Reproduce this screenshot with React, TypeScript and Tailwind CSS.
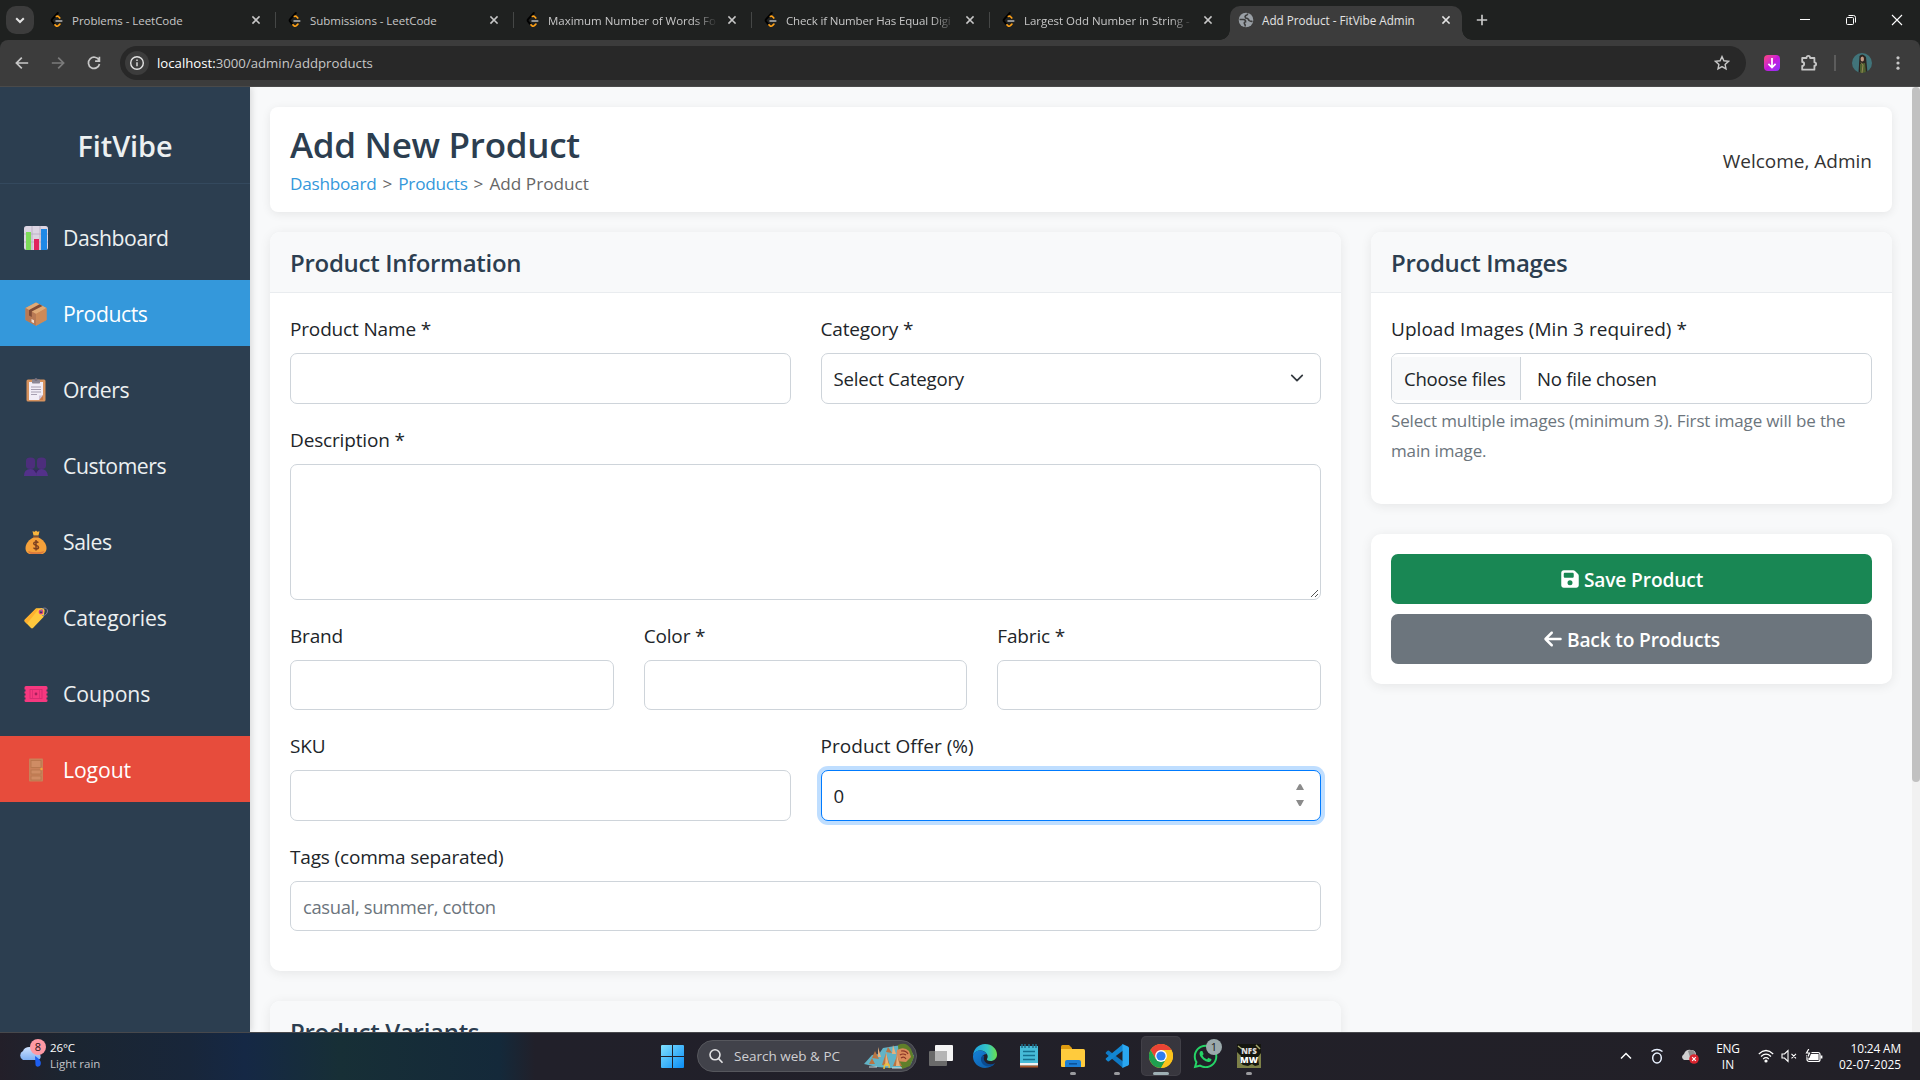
import type { ReactNode } from "react";
import { FaFloppyDisk, FaArrowLeft, FaWhatsapp } from "react-icons/fa6";

function LeetIcon() {
  return (
    <svg viewBox="0 0 16 16" className="size-4 shrink-0" fill="none" strokeLinecap="round">
      <path d="M8.800 1 3 7.400q-.8 1 0 2L5 11.800" stroke="#000" strokeWidth="1.900" />
      <path d="M7.400 4.400Q8.400 3.600 9.400 4.500L10.800 6" stroke="#ffa116" strokeWidth="1.700" />
      <path d="M6 12.800 6.900 13.700Q8.200 14.600 9.400 13.600L10.900 12.100" stroke="#ffa116" strokeWidth="1.700" />
      <path d="M7 9h5.800" stroke="#b9b9b9" strokeWidth="1.500" />
    </svg>
  );
}

function GlobeIcon() {
  return (
    <svg viewBox="0 0 16 16" className="size-4 shrink-0">
      <circle cx="8" cy="8" r="7.300" fill="#9aa0a6" />
      <path d="M1.500 7.500h3.800q2.500.2 2.300 2.300-2 .5-1 2.200.8.600.6 2.500M9.500 1.500Q9.800 3 7.800 3.500 6.500 4.500 7.500 6q3 .2 3.500 2.500 1.500 1.200 3.500.8" stroke="#3c3c3c" strokeWidth="1.600" fill="none" />
    </svg>
  );
}

function CloseIcon({ className = "" }: { className?: string }) {
  return (
    <svg viewBox="0 0 16 16" className={`size-4 shrink-0 ${className}`} stroke="currentColor" strokeWidth="1.600" strokeLinecap="square">
      <path d="M5 5l6 6M11 5l-6 6" />
    </svg>
  );
}

const tabs = [
  "Problems - LeetCode",
  "Submissions - LeetCode",
  "Maximum Number of Words Fo",
  "Check if Number Has Equal Digi",
  "Largest Odd Number in String -",
];

function TabStrip() {
  return (
    <div className="flex h-10 items-center bg-[#1f2120] pl-1.5">
      <div className="mr-1 flex size-7 items-center justify-center rounded-[10px] bg-[#3c3c3c] text-[#e3e3e3]">
        <svg viewBox="0 0 16 16" className="size-4" fill="none" stroke="currentColor" strokeWidth="2">
          <path d="M4.2 6.2 8 10l3.800-3.800" />
        </svg>
      </div>
      {tabs.map((t, i) => (
        <div key={t} className="flex h-7 w-[238px] shrink-0 items-center pl-[11px] text-[#c7c7c7]">
          <LeetIcon />
          <span
            className={`mt-[2px] ml-[7px] w-[170px] text-[11.5px] tracking-[-0.04px] whitespace-nowrap ${
              i > 1 ? "[mask-image:linear-gradient(to_right,#000_146px,transparent_170px)]" : ""
            } ${i === 3 ? "tracking-[-0.15px]" : ""}`}
          >
            {t}
          </span>
          <CloseIcon className="ml-1.5" />
          {i < 4 && <div className="ml-[11px] h-4 w-[1.5px] bg-[#454746]" />}
        </div>
      ))}
      <div className="relative mt-1.5 ml-0.5 flex h-[34px] w-[232px] shrink-0 items-center self-start rounded-t-[10px] bg-[#3c3c3c] pb-1.5 pl-2 text-[#e3e3e3]">
        <div className="absolute bottom-0 -left-2.5 size-2.5 bg-[radial-gradient(circle_at_0_0,transparent_9.5px,#3c3c3c_10px)]" />
        <div className="absolute -right-2.5 bottom-0 size-2.5 bg-[radial-gradient(circle_at_100%_0,transparent_9.5px,#3c3c3c_10px)]" />
        <GlobeIcon />
        <span className="mt-[2px] ml-2 w-[168px] text-[11.7px] whitespace-nowrap">Add Product - FitVibe Admin</span>
        <CloseIcon className="ml-2" />
      </div>
      <svg viewBox="0 0 16 16" className="ml-3 size-4 text-[#c7c7c7]" stroke="currentColor" strokeWidth="1.700">
        <path d="M8 2.800v10.400M2.800 8h10.400" />
      </svg>
      <div className="mr-[17px] ml-auto flex items-center gap-[34px] text-white">
        <svg viewBox="0 0 12 12" className="size-3" stroke="currentColor" strokeWidth="1"><path d="M1 5.500h10" /></svg>
        <svg viewBox="0 0 12 12" className="size-3" stroke="currentColor" strokeWidth="1" fill="none">
          <rect x="1.5" y="3.500" width="7" height="7" rx="1" />
          <path d="M3.500 1.500h5a2 2 0 0 1 2 2v5" />
        </svg>
        <svg viewBox="0 0 12 12" className="size-3" stroke="currentColor" strokeWidth="1.100"><path d="M1 1l10 10M11 1L1 11" /></svg>
      </div>
    </div>
  );
}

function Toolbar() {
  return (
    <div className="bg-[#1f2120]">
      <div className="flex h-[47px] items-center rounded-t-lg border-b border-[#4a4a4a] bg-[#3c3c3c] pl-3.5 text-[#c7c7c7]">
        <svg viewBox="0 0 16 16" className="size-4" fill="none" stroke="currentColor" strokeWidth="1.700"><path d="M14.200 8H2.500M7.800 2.600 2.400 8l5.400 5.400" /></svg>
        <svg viewBox="0 0 16 16" className="ml-5 size-4 text-[#7b7b7b]" fill="none" stroke="currentColor" strokeWidth="1.700"><path d="M1.800 8h11.700M8.200 2.600 13.600 8l-5.400 5.400" /></svg>
        <svg viewBox="0 0 16 16" className="ml-5 size-4" fill="none" stroke="currentColor" strokeWidth="1.700"><path d="M13 5.200A5.600 5.600 0 1 0 13.500 9M13.400 1.800v4.300H9.100" /></svg>
        <div className="ml-[18px] flex h-[34px] w-[1626px] items-center rounded-full bg-[#282828] pl-[5px]">
          <div className="flex size-6 items-center justify-center rounded-full bg-[#3c3c3c] text-[#e3e3e3]">
            <svg viewBox="0 0 16 16" className="size-4" fill="none" stroke="currentColor" strokeWidth="1.400">
              <circle cx="8" cy="8" r="6.300" />
              <path d="M8 7.200v4M8 4.500v1.500" />
            </svg>
          </div>
          <span className="mt-px ml-2 text-[13.2px] text-[#c7c7c7]"><span className="text-white">localhost:</span>3000/admin/addproducts</span>
          <svg viewBox="0 0 16 16" className="mr-4 ml-auto size-4" fill="none" stroke="currentColor" strokeWidth="1.400">
            <path d="M8 1.600l1.900 4.200 4.600.5-3.400 3.100.9 4.500L8 11.600l-4 2.300.9-4.500L1.500 6.300l4.600-.5z" />
          </svg>
        </div>
        <div className="ml-[18px] flex size-4 items-center justify-center rounded-sm bg-linear-to-br from-[#ff3d77] via-[#c814d8] to-[#8a2bff]">
          <svg viewBox="0 0 16 16" className="size-4" fill="none" stroke="#fff" strokeWidth="1.700"><path d="M8 3v9.400M4.400 8.800 8 12.600l3.600-3.800" /></svg>
        </div>
        <svg viewBox="0 0 18 18" className="ml-5 size-[18px]" fill="none" stroke="currentColor" strokeWidth="1.800" strokeLinejoin="round">
          <path d="M2.200 4h4.300c0-2.900 3.600-2.900 3.600 0h4.300v4.300c2.300 0 2.300 3.400 0 3.400v4H2.200v-3.900c2.600 0 2.600-3.800 0-3.800z" />
        </svg>
        <div className="ml-4 h-4 w-[1.5px] bg-[#5c5c5c]" />
        <svg viewBox="0 0 20 20" className="ml-4 size-5 rounded-full">
          <rect width="20" height="20" fill="#41747a" />
          <path d="M7.500 3q3-3.500 6.500 1l1.500 16h-9z" fill="#2c2520" />
          <ellipse cx="10.300" cy="6" rx="1.700" ry="2.600" fill="#c39b86" />
          <path d="M8 11l5-1 1 10H8z" fill="#4f6130" />
          <path d="M9 9.500l2 2.500-1 8" stroke="#a8935f" strokeWidth=".8" fill="none" />
        </svg>
        <svg viewBox="0 0 16 16" className="ml-[18px] size-4" fill="currentColor"><circle cx="8" cy="2.800" r="1.600" /><circle cx="8" cy="8" r="1.600" /><circle cx="8" cy="13.200" r="1.600" /></svg>
      </div>
    </div>
  );
}

const navIcons: Record<string, ReactNode> = {
  Dashboard: (
    <>
      <rect width="24" height="24" rx="2.500" fill="#dcd5e3" />
      <path d="M0 8h24M0 16h24M8 0v24M16 0v24" stroke="#b5abc0" strokeWidth=".8" />
      <rect x="2" y="6" width="5" height="18" fill="#7ddc5a" />
      <rect x="10" y="13" width="5" height="11" fill="#e0245e" />
      <rect x="17" y="3" width="6" height="21" fill="#1e88e5" />
    </>
  ),
  Products: (
    <>
      <path d="M12 .5 22.500 6v12L12 23.800 1.500 18V6z" fill="#c98a5f" />
      <path d="M12 .5 22.500 6 12 12 1.500 6z" fill="#e0aa76" />
      <path d="M12 12l10.500-6v12L12 23.800z" fill="#cd8a58" />
      <path d="M12 12 1.500 6v12L12 23.800z" fill="#b87954" />
      <path d="M15.500 2.300 5 8v5.500l2.800 1.500V9.500L18.500 4z" fill="#7f4b36" />
      <path d="M7.500 17l2.500 1.300v3L7.500 20z" fill="#f0dccd" />
    </>
  ),
  Orders: (
    <>
      <rect x="2.500" y="1.500" width="19" height="22" rx="1.500" fill="#d6925e" />
      <path d="M5 4h14v13l-4 5H5z" fill="#f2edf7" />
      <path d="M19 17v5h-4z" fill="#c87a4a" />
      <path d="M15 22v-4.500h4z" fill="#cfc5da" />
      <rect x="8" y="1.500" width="8" height="4" rx=".8" fill="#8d8795" />
      <circle cx="12" cy="1.500" r="1.500" fill="#77717f" />
      <path d="M7 9h10M7 11.500h10M7 14h10M7 16.500h6" stroke="#a79fb2" strokeWidth="1" />
    </>
  ),
  Customers: (
    <>
      <path d="M2 6.500Q2 3.500 6.500 3.500T11 6.500V12q0 3-4.500 3T2 12z" fill="#4d2e7c" />
      <path d="M13 6.500q0-3 4.500-3t4.500 3V12q0 3-4.500 3T13 12z" fill="#4d2e7c" />
      <path d="M0 22q0-7 6.500-7t5.500 7zM12 22q0-7 5.500-7t6.500 7z" fill="#53318a" />
      <path d="M9 15l3 1 3-1-3 4z" fill="#3a2266" />
    </>
  ),
  Sales: (
    <>
      <path d="M12 .5l1.300 1.200 2.200-.4-1 4.200h-5l-1-4.200 2.200.4z" fill="#f9b43c" />
      <path d="M9 6h6l-.5 1.800h-5z" fill="#8a4b2a" />
      <path d="M9.500 7.500h5c4 1.500 8 6 8 10.500 0 3.500-2 6-5 6h-11c-3 0-5-2.500-5-6 0-4.500 4-9 8-10.500z" fill="#f5a13a" />
      <path d="M4 21q8 2.500 16.500 0-1.500 3-4 3h-9Q5 24 4 21z" fill="#dd7a3c" />
      <path d="M14.300 12.800c-1-1.400-4.600-1.300-4.600.7 0 2.500 4.800 1.300 4.800 3.800 0 2-3.800 2.200-5 .4M12 10v10.500" stroke="#7b3f20" strokeWidth="1.500" fill="none" />
    </>
  ),
  Categories: (
    <>
      <path d="M12 2.500l6.500-.5q2.500 1 2 3.500L19.500 11 9 22q-1 .8-2 0L.7 15.500q-.7-.8 0-1.700z" fill="#ffc83d" />
      <path d="M.7 13.800 12 2.500h3L3 17.800.7 15.500z" fill="#ffb02e" />
      <circle cx="17" cy="6" r="2.400" fill="#e0408a" />
      <circle cx="17" cy="6" r="1.300" fill="#46305e" />
      <path d="M17 6c0-5 6.500-5 6.500-1 0 3-3 5-5.500 4.500" stroke="#8b8299" strokeWidth="1" fill="none" />
    </>
  ),
  Coupons: (
    <>
      <path d="M2 4h20q1.500 0 1.500 1.500V7.500h-1v2h1v2h-1v2h1v2h-1v2h1v1q0 1.500-1.500 1.500H2Q.5 20 .5 18.500v-1h1v-2h-1v-2h1v-2h-1v-2h1v-2h-1v-2Q.5 4 2 4z" fill="#f6387f" />
      <rect x="6" y="7.500" width="12" height="9" fill="none" stroke="#cf2a6e" strokeWidth=".8" />
      <path d="M8.500 8v8M15.500 8v8" stroke="#cf2a6e" strokeWidth=".6" />
      <circle cx="12" cy="12" r="1.400" fill="#a9205d" />
    </>
  ),
  Logout: (
    <>
      <rect x="5" y=".5" width="14" height="23" rx=".8" fill="#c98159" />
      <rect x="7" y="2.500" width="10" height="7" fill="#cf8c64" stroke="#b5754d" strokeWidth=".8" />
      <rect x="7" y="12" width="10" height="4" fill="#cf8c64" stroke="#b5754d" strokeWidth=".8" />
      <rect x="7" y="18" width="10" height="4" fill="#cf8c64" stroke="#b5754d" strokeWidth=".8" />
      <circle cx="17.500" cy="11" r="1.200" fill="#f2a63a" />
    </>
  ),
};

const looseLabels = ["Categories", "Coupons", "Logout"];

function Sidebar() {
  return (
    <aside className="z-10 w-[250px] shrink-0 bg-[#2c3e50] text-[#ecf0f1] shadow-[2px_0_6px_rgba(0,0,0,0.12)]">
      <div className="flex h-[97px] items-center justify-center border-b border-[#34495e] pt-[22px] text-[28.8px] font-semibold tracking-[-0.05px]">FitVibe</div>
      <nav className="flex flex-col gap-2.5 pt-5">
        {Object.keys(navIcons).map((name) => (
          <div
            key={name}
            className={`flex h-[66px] items-center pt-[2px] pl-6 ${name === "Products" ? "bg-[#3498db] text-white" : ""} ${name === "Logout" ? "bg-[#e74c3c] text-white" : ""}`}
          >
            <svg viewBox="0 0 24 24" className="size-6">{navIcons[name]}</svg>
            <span className={`ml-[15px] text-[21.2px] ${looseLabels.includes(name) ? "tracking-[-0.1px]" : "tracking-[-0.42px]"}`}>{name}</span>
          </div>
        ))}
      </nav>
    </aside>
  );
}

const box = "rounded-[7px] border border-[#ced4da] bg-white";

function Field({ label, children }: { label: string; children: ReactNode }) {
  const wide = label.includes("Offer") || label.startsWith("Upload");
  return (
    <div className="flex flex-col">
      <div className={`mb-[9px] h-[30px] text-[19px] leading-[30px] text-[#212529] ${wide ? "tracking-[0.04px]" : "tracking-[-0.16px]"}`}>{label}</div>
      {children}
    </div>
  );
}

function Card({ title, className = "", children }: { title?: string; className?: string; children?: ReactNode }) {
  return (
    <section className={`overflow-hidden rounded-[10px] bg-white shadow-[0_2px_12px_rgba(0,0,0,0.08)] ${className}`}>
      {title && (
        <h2 className="flex h-[61px] items-center border-b border-[#e9ecef] bg-[#f8f9fa] px-5 pt-[2px] text-[24px] font-semibold tracking-[-0.29px] text-[#2c3e50]">{title}</h2>
      )}
      {children}
    </section>
  );
}

function Page() {
  return (
    <main className="flex flex-1 bg-[#f8f9fa]">
      <div className="flex-1 pt-5 pr-5 pl-5">
        <header className="mb-5 flex h-[105px] items-center justify-between rounded-lg bg-white px-5 shadow-[0_2px_10px_rgba(0,0,0,0.08)]">
          <div className="flex flex-col">
            <h1 className="h-[42px] text-[35px] leading-[43px] font-semibold tracking-[-0.3px] text-[#2c3e50]">Add New Product</h1>
            <div className="mt-[5px] h-[27px] text-[17.2px] leading-[27px] text-[#666]">
              <span className="tracking-[-0.25px] text-[#3498db]">Dashboard</span>
              <span className="mr-[6px] ml-[6px]">&gt;</span>
              <span className="tracking-[-0.25px] text-[#3498db]">Products</span>
              <span className="mx-[6px]">&gt;</span>
              <span>Add Product</span>
            </div>
          </div>
          <div className="pt-1 text-[19px] text-[#333]">Welcome, Admin</div>
        </header>
        <div className="flex items-start gap-[30px]">
          <div className="flex w-[1071px] flex-col gap-[30px]">
            <Card title="Product Information" className="h-[739px]">
              <div className="flex flex-col gap-[21px] px-5 pt-[21px]">
                <div className="grid grid-cols-2 gap-[30px]">
                  <Field label="Product Name *"><div className={`h-[51px] ${box}`} /></Field>
                  <Field label="Category *">
                    <div className={`flex h-[51px] items-center justify-between pr-4 pl-3 ${box}`}>
                      <span className="text-[18.6px] tracking-[-0.2px] text-[#212529]">Select Category</span>
                      <svg viewBox="0 0 16 16" className="mb-px size-[14px]" fill="none" stroke="#343a40" strokeWidth="2" strokeLinecap="round" strokeLinejoin="round"><path d="m2 5 6 6 6-6" /></svg>
                    </div>
                  </Field>
                </div>
                <Field label="Description *">
                  <div className={`flex h-[136px] items-end justify-end p-px ${box}`}>
                    <svg viewBox="0 0 9 9" className="size-[9px]" stroke="#555" strokeWidth="1"><path d="M1 8 8 1M5 8l3-3" /></svg>
                  </div>
                </Field>
                <div className="grid grid-cols-3 gap-[30px]">
                  <Field label="Brand"><div className={`h-[50px] ${box}`} /></Field>
                  <Field label="Color *"><div className={`h-[50px] ${box}`} /></Field>
                  <Field label="Fabric *"><div className={`h-[50px] ${box}`} /></Field>
                </div>
                <div className="grid grid-cols-2 gap-[30px]">
                  <Field label="SKU"><div className={`h-[51px] ${box}`} /></Field>
                  <Field label="Product Offer (%)">
                    <div className="flex h-[51px] items-center justify-between rounded-[7px] border border-[#007bff] bg-white pr-[15px] pl-3 shadow-[0_0_0_4px_rgba(0,123,255,0.25)]">
                      <span className="text-[18.6px] text-[#212529]">0</span>
                      <svg viewBox="0 0 10 24" className="mb-[2px] h-6 w-2.5" fill="#8b8b8b"><path d="M1 7 4 1.500q1-1 2 0L9 7zM1 17l3 5.500q1 1 2 0L9 17z" /></svg>
                    </div>
                  </Field>
                </div>
                <Field label="Tags (comma separated)">
                  <div className={`flex h-[50px] items-center pt-px pl-3 text-[18.4px] tracking-[-0.34px] text-[#6c757d] ${box}`}>casual, summer, cotton</div>
                </Field>
              </div>
            </Card>
            <Card title="Product Variants" className="h-[200px]" />
          </div>
          <div className="flex flex-1 flex-col gap-[30px]">
            <Card title="Product Images" className="h-[272px]">
              <div className="px-5 pt-[21px]">
                <Field label="Upload Images (Min 3 required) *">
                  <div className={`flex h-[51px] items-center text-[18.6px] tracking-[-0.25px] text-[#212529] ${box}`}>
                    <span className="flex h-[43px] w-[129px] items-center border-r border-[#ced4da] bg-[#f8f9fa] pl-3">Choose files</span>
                    <span className="ml-4">No file chosen</span>
                  </div>
                </Field>
                <p className="mt-0.5 text-[17px] leading-[30px] tracking-[-0.15px] text-[#6c757d]">
                  Select multiple images (minimum 3). First image will be the<br />main image.
                </p>
              </div>
            </Card>
            <Card className="flex h-[150px] flex-col gap-2.5 p-5">
              <div className="flex h-[50px] items-center justify-center gap-1 rounded-[7px] bg-[#198754] pt-[2px] text-[19.2px] font-semibold tracking-[-0.15px] text-white">
                <FaFloppyDisk className="mb-[2px] size-[20px]" />Save Product
              </div>
              <div className="flex h-[50px] items-center justify-center gap-1 rounded-[7px] bg-[#6c757d] pt-[2px] text-[19.2px] font-semibold tracking-[-0.18px] text-white">
                <FaArrowLeft className="mb-[2px] size-[20px]" />Back to Products
              </div>
            </Card>
          </div>
        </div>
      </div>
      <div className="w-2 bg-[#f1f1f1]"><div className="h-[695px] rounded-[4px] bg-[#c1c1c1]" /></div>
    </main>
  );
}

function TaskIcon({ children, active, dot }: { children: ReactNode; active?: boolean; dot?: boolean }) {
  return (
    <div className={`relative flex h-10 w-10 items-center justify-center rounded-[5px] ${active ? "border border-white/5 bg-white/10" : ""}`}>
      {children}
      {dot && <div className="absolute bottom-px h-[3px] w-1.5 rounded-full bg-[#9a9a9e]" />}
      {active && <div className="absolute bottom-0 h-[3px] w-4 rounded-full bg-[#9fb0b5]" />}
    </div>
  );
}

function Taskbar() {
  return (
    <footer className="flex h-12 items-center border-t border-[#47484c] bg-[linear-gradient(to_right,#231f29_0px,#1b2531_70px,#18263a_190px,#152845_245px,#172f36_340px,#14293a_500px,#21202a_535px,#222027_100%)] pb-px text-white">
      <div className="flex w-[652px] items-center pl-[17px]">
        <div className="relative size-7">
          <svg viewBox="0 0 28 28" className="size-7">
            <defs>
              <linearGradient id="cloud" x1="0" y1="0" x2="0" y2="1"><stop offset="0" stopColor="#cfe2fd" /><stop offset="1" stopColor="#7fb0f3" /></linearGradient>
            </defs>
            <path d="M6 18a5 5 0 0 1 0-9c1.500-5 11-6 13 1 5 0 7 8 1 8z" fill="url(#cloud)" />
            <path d="M18 14c4 3 7 5 5.500 9-1.500 2.500-5 2-5-.5z" fill="#1d5ff2" />
          </svg>
          <span className="absolute -top-[3px] left-[13px] flex size-4 items-center justify-center rounded-full bg-[#ff99a4] text-[11px] text-[#2b1116]">8</span>
        </div>
        <div className="ml-[5px] text-[11.5px] leading-4">
          <div className="tracking-[-0.1px]">26°C</div>
          <div className="text-[#c3c3c8]">Light rain</div>
        </div>
      </div>
      <TaskIcon>
        <svg viewBox="0 0 23 23" className="size-[23px]">
          <defs><linearGradient id="win" x1="0" y1="0" x2="1" y2="1"><stop offset="0" stopColor="#7fe0ff" /><stop offset="1" stopColor="#0a8df5" /></linearGradient></defs>
          <path d="M0 1q0-1 1-1h10v11H0zM12 0h10q1 0 1 1v10H12zM0 12h11v11H1q-1 0-1-1zM12 12h11v10q0 1-1 1H12z" fill="url(#win)" />
        </svg>
      </TaskIcon>
      <div className="ml-[5px] flex h-8 w-[220px] items-center rounded-full border border-[#56575d] bg-[#41424a] pl-2.5 text-[#cfcfd2]">
        <svg viewBox="0 0 16 16" className="size-4" fill="none" stroke="#e2e2e4" strokeWidth="1.600"><circle cx="7" cy="6.800" r="5" /><path d="M10.600 10.600 14.500 14.800" /></svg>
        <span className="ml-2.5 text-[13.5px]">Search web &amp; PC</span>
        <svg viewBox="0 0 50 26" className="mr-0.5 ml-auto h-[26px] w-[50px]">
          <path d="M0 21 8 12l7-1 4-6 12-2 8-1 7 4 4 7-3 8-7 4-14 0-13-1z" fill="#62b3c6" />
          <path d="M34 2q8-4 13 4l3 8-4 9-8 3-3-6z" fill="#5f7f2a" />
          <path d="M33 7q7-4 12 1l2 6-5 5-10-1z" fill="#d98a5a" />
          <path d="M37 8q5-1 7 3M36 12q3-2 6 0M37 15q3-2 5 1" stroke="#8a3326" fill="none" strokeWidth="1.200" />
          <path d="M5 21l3-6 3 6zM8 15l3-7 4 8zM22 9l2-5 4 6zM18 22l4-12 4 13zM29 23l4-10 5 10z" fill="#b97442" />
          <path d="M22 9l3 14h-4zM14 4l3 10h-3zM33 12l3 11h-4zM29 2l3 9h-4z" fill="#e9b07a" />
          <path d="M20 26q0-5 3-5t2 4" stroke="#e7c23b" strokeWidth="1.500" fill="none" />
          <path d="M5 24h8M28 25h10" stroke="#d9eef2" strokeWidth=".9" />
        </svg>
      </div>
      <div className="ml-1 flex items-center gap-1">
        <TaskIcon>
          <svg viewBox="0 0 24 24" className="size-6"><rect x="6" y="1" width="18" height="16" rx="1" fill="#f4f4f4" /><rect x="0" y="7" width="18" height="15" rx="1" fill="#6a6a6a" /><path d="M6 7h12v10H6z" fill="#b5b5b5" /></svg>
        </TaskIcon>
        <TaskIcon>
          <svg viewBox="0 0 24 24" className="size-6">
            <defs>
              <linearGradient id="e1" x1="0" y1="0" x2="1" y2="0"><stop offset="0" stopColor="#1b9de2" /><stop offset=".6" stopColor="#35c6c4" /><stop offset="1" stopColor="#6be04b" /></linearGradient>
              <linearGradient id="e2" x1="0" y1="0" x2="1" y2="1"><stop offset="0" stopColor="#1582d8" /><stop offset="1" stopColor="#0c59a4" /></linearGradient>
            </defs>
            <path d="M0 11.500C.5 5 5.500 0 12 0c7 0 12 5 12 10.500 0 4-3 6.500-6.500 6.500-3 0-4-1.200-3.500-2 1-1.500.8-3 .3-4.200C13 8 10 6.500 7.500 6.500 4 6.500 1 8.500 0 11.500z" fill="url(#e1)" />
            <path d="M0 12C.5 8.500 4 6.500 7.500 6.500c2.500 0 5 1.300 6 3.500-4 .5-5.500 3.500-4.800 6.500.8 3.700 5 5.500 9 4.800 1.500-.3 3.300-1.300 4.300-2C20 22 16.500 24 12 24 5 24-.3 18.500 0 12z" fill="url(#e2)" />
            <path d="M9.500 11.500c-2.500 2.500-2 7 1.500 9.500 3.300 2.300 8.500 1.300 11-1.700-4 2-9 .7-10.500-2.300-1-2-.7-4-.2-5z" fill="#0b4a8f" />
          </svg>
        </TaskIcon>
        <TaskIcon>
          <svg viewBox="0 0 20 24" className="h-6 w-5">
            <rect x="1" y="2" width="18" height="20" fill="#47bcd8" /><rect x="1" y="19" width="18" height="2.500" fill="#f1f1f1" /><rect x="1" y="21.500" width="18" height="2" fill="#a9562a" />
            <path d="M3 0v4M6 0v4M10 0v4M14 0v4M17 0v4" stroke="#1f6f8c" strokeWidth="1.500" /><path d="M4 7.500h12M4 11.500h12M4 15.500h12" stroke="#14708f" strokeWidth="1.500" />
          </svg>
        </TaskIcon>
        <TaskIcon dot>
          <svg viewBox="0 0 24 24" className="size-6">
            <path d="M0 2.500Q0 1 1.500 1H8l3 3v5H0z" fill="#e09c10" /><path d="M0 5h22.500Q24 5 24 6.500V22q0 1-1 1H1q-1 0-1-1z" fill="#ffcb3d" />
            <path d="M4 23v-5q0-2 2-2h12q2 0 2 2v5z" fill="#1c7fd6" /><rect x="8" y="19" width="8" height="1.600" fill="#0c539a" />
          </svg>
        </TaskIcon>
        <TaskIcon dot>
          <svg viewBox="0 0 24 24" className="size-6">
            <path d="M1 8.200 2.600 6.800q.7-.5 1.400 0L18 17.500V24L1 9.700q-.7-.8 0-1.500z" fill="#0f79c4" />
            <path d="M1 15.800l1.600 1.400q.7.500 1.400 0L18 6.500V0L1 14.300q-.7.800 0 1.500z" fill="#1286d2" />
            <path d="M17.500 0 23 2.600q1 .5 1 1.500v15.800q0 1-1 1.500L17.500 24z" fill="#2aa7f1" />
          </svg>
        </TaskIcon>
        <TaskIcon active>
          <svg viewBox="0 0 24 24" className="size-6">
            <circle cx="12" cy="12" r="12" fill="#fbc116" />
            <path d="M12 6h10.400A12 12 0 0 0 1.600 6l5.200 9z" fill="#ea4335" />
            <path d="M1.600 6A12 12 0 0 0 12 24l5.200-9-5.200-3-5.200 3z" fill="#1fa050" />
            <path d="M22.400 6A12 12 0 0 1 12 24l5.200-9a6 6 0 0 0 0-6L12 6z" fill="#fcc31c" />
            <circle cx="12" cy="12" r="5.900" fill="#fff" /><circle cx="12" cy="12" r="4.600" fill="#2f7df0" />
          </svg>
        </TaskIcon>
        <TaskIcon>
          <FaWhatsapp className="size-[27px] text-[#25d366]" />
          <span className="absolute top-[3px] right-[3px] flex size-4 items-center justify-center rounded-full bg-[#9aa9ab] text-[11px] text-[#1b1b1f]">1</span>
        </TaskIcon>
        <TaskIcon dot>
          <svg viewBox="0 0 24 24" className="size-6">
            <rect width="24" height="24" fill="#7d8048" />
            <path d="M0 0h24v9l-3 4 1 8-4 1-3-2-4 2-5-1-3-3 1-6-4-4z" fill="#15160f" />
            <path d="M1 2l4 3M19 1l4 4" stroke="#a7a96c" strokeWidth="1.500" />
            <text x="12" y="10" textAnchor="middle" fontSize="8" fontWeight="800" fill="#ddd" fontFamily="Open Sans">NFS</text>
            <text x="12" y="19" textAnchor="middle" fontSize="9" fontWeight="800" fill="#fff" fontFamily="Open Sans">MW</text>
          </svg>
        </TaskIcon>
      </div>
      <div className="mr-[19px] ml-auto flex items-center text-[11.9px] leading-4">
        <svg viewBox="0 0 12 12" className="size-3" fill="none" stroke="#fff" strokeWidth="1.500"><path d="M1 8.500 6 3.500l5 5" /></svg>
        <svg viewBox="0 0 14 16" className="ml-[18px] h-4 w-3.5" fill="none" stroke="#e9f1ff" strokeWidth="1.500"><path d="M1.500 3.500Q7-.5 12.500 3.500" /><ellipse cx="7" cy="10" rx="4.300" ry="4.900" /></svg>
        <svg viewBox="0 0 18 16" className="ml-[17px] h-4 w-[18px]"><path d="M3 12q-4-3 0-6Q5 1 10 2q5 0 5 5l-3 5z" fill="#cfcfcf" /><path d="M7 3q5-3 7 2v4H9z" fill="#8d8d8d" /><circle cx="13" cy="11" r="4.800" fill="#d9252f" /><path d="M11.200 9.200l3.600 3.600M14.800 9.200l-3.600 3.600" stroke="#fff" strokeWidth="1.200" /></svg>
        <div className="ml-[15px] w-[28px] text-center"><div className="tracking-[-0.2px]">ENG</div><div>IN</div></div>
        <svg viewBox="0 0 16 14" className="ml-4 h-3.5 w-4" fill="none" stroke="#fff" strokeWidth="1.200"><path d="M.8 5Q8-2 15.200 5M3 7.500q5-4.600 10 0M5.200 10q2.800-2.600 5.600 0" /><circle cx="8" cy="12" r="1" fill="#fff" /></svg>
        <svg viewBox="0 0 16 14" className="ml-[7px] h-3.5 w-4" fill="none" stroke="#fff" strokeWidth="1.100"><path d="M1 5h2.500L7 1.500v11L3.500 9H1zM10.500 4.800l4.500 4.500M15 4.800l-4.500 4.500" /></svg>
        <svg viewBox="0 0 18 14" className="ml-2 h-3.5 w-[18px]" fill="none" stroke="#fff" strokeWidth="1.200"><rect x="2" y="3.500" width="13" height="9" rx="2" /><rect x="4" y="5.500" width="9" height="5" fill="#fff" /><path d="M16.500 6.500v3" strokeWidth="1.800" /><path d="M4.500-.5 1.500 4.500h3L3 8.500" stroke="#222027" strokeWidth="3" /><path d="M3.800 0 1.500 4h3L3 7.500" /></svg>
        <div className="ml-[16px] w-[62px] text-right whitespace-nowrap"><div className="tracking-[-0.15px]">10:24 AM</div><div>02-07-2025</div></div>
      </div>
    </footer>
  );
}

export default function App() {
  return (
    <div className="flex h-[1080px] w-[1920px] flex-col overflow-hidden font-['Open_Sans','Noto_Sans',sans-serif]">
      <TabStrip />
      <Toolbar />
      <div className="flex h-[945px] shrink-0 overflow-hidden">
        <Sidebar />
        <Page />
      </div>
      <Taskbar />
    </div>
  );
}
